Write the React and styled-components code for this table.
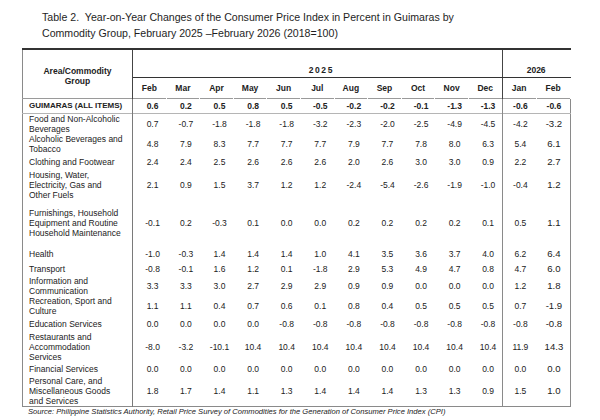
import React from "react";
import styled, { createGlobalStyle } from "styled-components";

const GlobalStyle = createGlobalStyle`
  body {
    margin: 0;
    background: #ffffff;
    font-family: "Liberation Sans", Arial, sans-serif;
    color: #222;
  }
`;

const Page = styled.div`
  width: 600px;
  height: 420px;
  padding: 9px 0 0 22px;
  box-sizing: border-box;
  overflow: hidden;
`;

const Title = styled.h1`
  margin: 0 0 7px 20px;
  font-size: 10.6px;
  line-height: 16px;
  font-weight: 400;
  color: #1e1e1e;
`;

const Table = styled.table`
  border-collapse: collapse;
  table-layout: fixed;
  width: 548px;
  border: 1px solid #8a8a8a;
  border-top: 2px solid #333;
  font-size: 8.5px;
  line-height: 10px;
`;

const HeadCell = styled.th`
  font-weight: 700;
  font-size: 8.5px;
  padding: 0;
  text-align: center;
  vertical-align: ${(p) => (p.$rule ? "bottom" : "middle")};
  border-right: 1px solid ${(p) => (p.$divider ? "#444" : "transparent")};
  border-bottom: ${(p) => (p.$rule ? "1.5px solid #333" : "none")};
  letter-spacing: ${(p) => (p.$spaced ? "1.6px" : "0")};
  padding-left: ${(p) => (p.$spaced ? "8px" : "0")};
  padding-bottom: ${(p) => (p.$rule ? "2px" : "0")};
  padding-top: ${(p) => (p.$tall ? "4px" : "0")};
`;

const MonthRow = styled.tr`
  height: 21px;
  border-bottom: 1px solid #9a9a9a;
`;

const TopRow = styled.tr`
  height: 28px;
`;

const Row = styled.tr`
  height: ${(p) => p.$h}px;
  border-bottom: ${(p) => (p.$total ? "1px solid #b5b5b5" : "none")};
`;

const LabelCell = styled.td`
  padding: 0 0 0 6px;
  text-align: left;
  vertical-align: middle;
  white-space: nowrap;
  font-weight: ${(p) => (p.$bold ? 700 : 400)};
  font-size: ${(p) => (p.$bold ? "8px" : "8.5px")};
  border-right: 1px solid #7a7a7a;
`;

const ValueCell = styled.td`
  padding: 0 0 0 ${(p) => (p.$year === 2026 ? 2 : 6)}px;
  text-align: center;
  vertical-align: middle;
  white-space: nowrap;
  font-weight: ${(p) => (p.$bold ? 700 : 400)};
  font-size: ${(p) => (p.$big && !p.$bold ? "9.6px" : "8.5px")};
  border-right: ${(p) => (p.$divider ? "1px solid #8a8a8a" : "none")};
`;

const Source = styled.p`
  margin: 0 0 0 6px;
  font-size: 7.6px;
  line-height: 9px;
  font-style: italic;
  color: #222;
`;

const months = ["Feb", "Mar", "Apr", "May", "Jun", "Jul", "Aug", "Sep", "Oct", "Nov", "Dec", "Jan", "Feb"];

const total = ["0.6", "0.2", "0.5", "0.8", "0.5", "-0.5", "-0.2", "-0.2", "-0.1", "-1.3", "-1.3", "-0.6", "-0.6"];

const rows = [
  { label: ["Food and Non-Alcoholic", "Beverages"], h: 21, v: "0.7 -0.7 -1.8 -1.8 -1.8 -3.2 -2.3 -2.0 -2.5 -4.9 -4.5 -4.2 -3.2" },
  { label: ["Alcoholic Beverages and", "Tobacco"], h: 20, v: "4.8 7.9 8.3 7.7 7.7 7.7 7.9 7.7 7.8 8.0 6.3 5.4 6.1" },
  { label: ["Clothing and Footwear"], h: 16, v: "2.4 2.4 2.5 2.6 2.6 2.6 2.0 2.6 3.0 3.0 0.9 2.2 2.7" },
  { label: ["Housing, Water,", "Electricity, Gas and", "Other Fuels"], h: 29, v: "2.1 0.9 1.5 3.7 1.2 1.2 -2.4 -5.4 -2.6 -1.9 -1.0 -0.4 1.2" },
  { label: ["Furnishings, Household", "Equipment and Routine", "Household Maintenance"], h: 46, v: "-0.1 0.2 -0.3 0.1 0.0 0.0 0.2 0.2 0.2 0.2 0.1 0.5 1.1" },
  { label: ["Health"], h: 16, v: "-1.0 -0.3 1.4 1.4 1.4 1.0 4.1 3.5 3.6 3.7 4.0 6.2 6.4" },
  { label: ["Transport"], h: 13, v: "-0.8 -0.1 1.6 1.2 0.1 -1.8 2.9 5.3 4.9 4.7 0.8 4.7 6.0" },
  { label: ["Information and", "Communication"], h: 21, v: "3.3 3.3 3.0 2.7 2.9 2.9 0.9 0.9 0.0 0.0 0.0 1.2 1.8" },
  { label: ["Recreation, Sport and", "Culture"], h: 18, v: "1.1 1.1 0.4 0.7 0.6 0.1 0.8 0.4 0.5 0.5 0.5 0.7 -1.9" },
  { label: ["Education Services"], h: 16, v: "0.0 0.0 0.0 0.0 -0.8 -0.8 -0.8 -0.8 -0.8 -0.8 -0.8 -0.8 -0.8" },
  { label: ["Restaurants and", "Accommodation", "Services"], h: 30, v: "-8.0 -3.2 -10.1 10.4 10.4 10.4 10.4 10.4 10.4 10.4 10.4 11.9 14.3" },
  { label: ["Financial Services"], h: 14, v: "0.0 0.0 0.0 0.0 0.0 0.0 0.0 0.0 0.0 0.0 0.0 0.0 0.0" },
  { label: ["Personal Care, and", "Miscellaneous Goods", "and Services"], h: 30, v: "1.8 1.7 1.4 1.1 1.3 1.4 1.4 1.4 1.3 1.3 0.9 1.5 1.0" },
];

const Values = ({ values, bold }) =>
  values.map((val, i) => (
    <ValueCell
      key={i}
      $bold={bold}
      $year={i >= 11 ? 2026 : 2025}
      $divider={i === 10}
      $big={i === 12}
    >
      {val}
    </ValueCell>
  ));

const App = () => {
  return (
    <Page>
      <GlobalStyle />
      <Title>
        Table 2.&nbsp; Year-on-Year Changes of the Consumer Price Index in Percent in Guimaras by
        <br />
        Commodity Group, February 2025 –February 2026 (2018=100)
      </Title>
      <Table>
        <colgroup>
          <col style={{ width: 110 }} />
          {months.map((m, i) => (
            <col key={i} style={{ width: i >= 11 ? 34 : 33.6 }} />
          ))}
        </colgroup>
        <thead>
          <TopRow>
            <HeadCell rowSpan={2} $divider $tall>
              Area/Commodity
              <br />
              Group
            </HeadCell>
            <HeadCell colSpan={11} $rule $divider $spaced>
              2025
            </HeadCell>
            <HeadCell colSpan={2} $rule>
              2026
            </HeadCell>
          </TopRow>
          <MonthRow>
            {months.map((m, i) => (
              <HeadCell key={i} $divider={i === 10}>
                {m}
              </HeadCell>
            ))}
          </MonthRow>
        </thead>
        <tbody>
          <Row $h={15} $total>
            <LabelCell $bold>GUIMARAS (ALL ITEMS)</LabelCell>
            <Values values={total} bold />
          </Row>
          {rows.map((r) => (
            <Row key={r.label[0]} $h={r.h}>
              <LabelCell>
                {r.label.map((line, i) => (
                  <React.Fragment key={i}>
                    {i > 0 && <br />}
                    {line}
                  </React.Fragment>
                ))}
              </LabelCell>
              <Values values={r.v.split(" ")} />
            </Row>
          ))}
        </tbody>
      </Table>
      <Source>
        Source: Philippine Statistics Authority, Retail Price Survey of Commodities for the Generation of Consumer Price Index (CPI)
      </Source>
    </Page>
  );
};

export default App;
